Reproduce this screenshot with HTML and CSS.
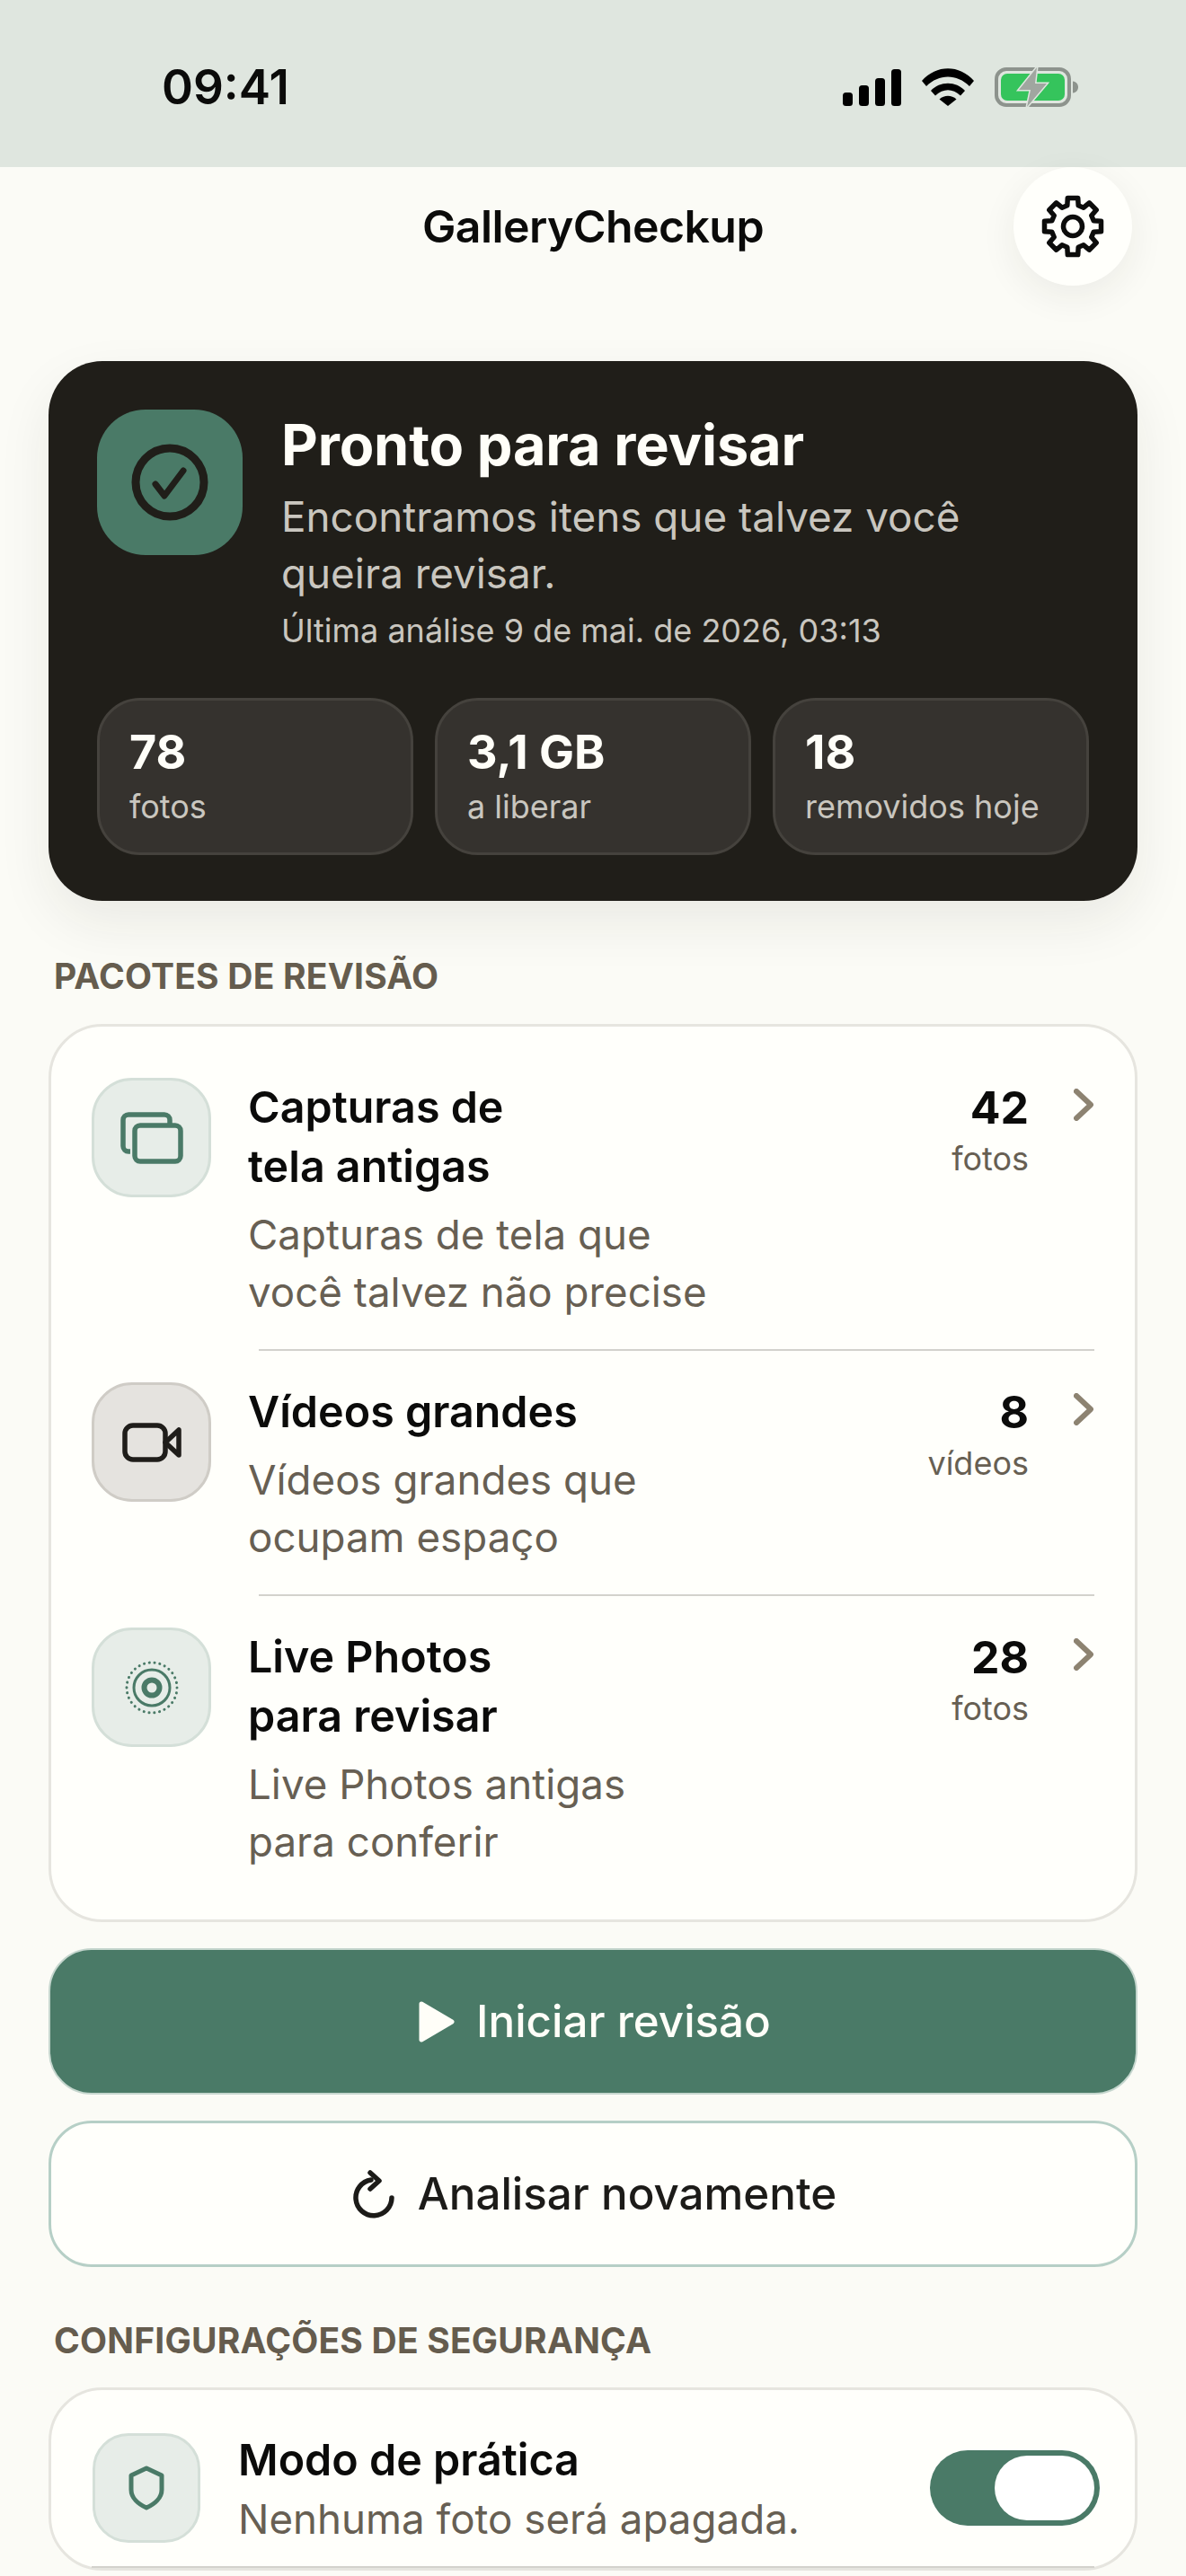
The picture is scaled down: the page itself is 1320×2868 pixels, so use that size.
FILE: index.html
```html
<!DOCTYPE html>
<html lang="pt-BR">
<head>
  <meta charset="UTF-8">
  <meta name="viewport" content="width=device-width, initial-scale=1.0">
  <title>GalleryCheckup</title>
  <link rel="stylesheet" href="styles.css">
</head>
<body>
  <div class="status">
    <span class="status__time">09:41</span>
    <div class="status__icons">
      <svg class="status__signal" width="65" height="41" viewBox="0 0 65 41">
        <rect x="0" y="26" width="11" height="15" rx="3.5"/>
        <rect x="18" y="18" width="11" height="23" rx="3.5"/>
        <rect x="36" y="10" width="11" height="31" rx="3.5"/>
        <rect x="54" y="0" width="11" height="41" rx="3.5"/>
      </svg>
      <svg class="status__wifi" width="58" height="42" viewBox="0 0 58 42">
        <path d="M0 14C16-4.500 42-4.500 58 14L53 20C39 6 19 6 5 20Z"/>
        <path d="M10 25C20 14 38 14 48 25L43 30.500C34 22 24 22 15 30.500Z"/>
        <path d="M19.500 34.500C25 29.500 33 29.500 38.500 34.500L29 42Z"/>
      </svg>
      <svg class="status__battery" width="93" height="44" viewBox="0 0 93 44">
        <rect x="2" y="2" width="81" height="40" rx="11" fill="none" stroke="#8d938d" stroke-width="4"/>
        <rect x="7" y="7" width="71" height="30" rx="7" fill="#35c45c"/>
        <path d="M87 15.500C91 16 93 19 93 22C93 25 91 28 87 28.500Z" fill="#8d938d"/>
        <path d="M47 0L27 25H40L36 44L58 18H45Z" fill="#a0a6a0" stroke="#dfe6df" stroke-width="3" paint-order="stroke"/>
      </svg>
    </div>
  </div>

  <header class="topbar">
    <h1 class="topbar__title">GalleryCheckup</h1>
    <button class="topbar__gear" type="button" aria-label="Configurações">
      <svg width="72" height="72" viewBox="-36 -36 72 72" fill="none" stroke="#0c0c0b" stroke-width="5.500" stroke-linejoin="round">
        <polygon points="-6.200,-23.200 -5.700,-31.500 5.700,-31.500 6.200,-23.200 12,-20.800 18.300,-26.200 26.200,-18.300 20.800,-12 23.200,-6.200 31.500,-5.700 31.500,5.700 23.200,6.200 20.800,12 26.200,18.300 18.300,26.200 12,20.800 6.200,23.200 5.700,31.500 -5.700,31.500 -6.200,23.200 -12,20.800 -18.300,26.200 -26.200,18.300 -20.800,12 -23.200,6.200 -31.500,5.700 -31.500,-5.700 -23.200,-6.200 -20.800,-12 -26.200,-18.300 -18.300,-26.200 -12,-20.800"/>
        <circle r="10.500"/>
      </svg>
    </button>
  </header>

  <main class="content">
    <section class="hero">
      <div class="hero__top">
        <div class="hero__icon">
          <svg width="86" height="86" viewBox="0 0 86 86" fill="none" stroke="#201e19" stroke-linecap="round" stroke-linejoin="round">
            <circle cx="43" cy="43" r="38" stroke-width="9"/>
            <path d="M27 45L37 58L58 30" stroke-width="7"/>
          </svg>
        </div>
        <div class="hero__text">
          <h2 class="hero__title">Pronto para revisar</h2>
          <p class="hero__desc">Encontramos itens que talvez você<br>queira revisar.</p>
          <p class="hero__date">Última análise 9 de mai. de 2026, 03:13</p>
        </div>
      </div>
      <div class="stats">
        <div class="stat"><div class="stat__value">78</div><div class="stat__label">fotos</div></div>
        <div class="stat"><div class="stat__value">3,1 GB</div><div class="stat__label">a liberar</div></div>
        <div class="stat"><div class="stat__value">18</div><div class="stat__label">removidos hoje</div></div>
      </div>
    </section>

    <h3 class="section-label">PACOTES DE REVISÃO</h3>
    <section class="card card--list">
      <div class="row">
        <div class="tile">
          <svg width="70" height="58" viewBox="0 0 70 58" fill="none" stroke="#4a7a67" stroke-width="5.500" stroke-linejoin="round">
            <path d="M11 44H9A6 6 0 0 1 3 38V9A6 6 0 0 1 9 3H49A6 6 0 0 1 55 9V15"/>
            <rect x="16" y="15" width="51" height="40" rx="6"/>
          </svg>
        </div>
        <div class="row__body">
          <div class="row__title">Capturas de<br>tela antigas</div>
          <div class="row__desc">Capturas de tela que<br>você talvez não precise</div>
        </div>
        <div class="row__count"><div class="row__num">42</div><div class="row__unit">fotos</div></div>
        <svg class="chevron" width="22" height="36" viewBox="0 0 22 36"><path d="M3 3L19 18L3 33"/></svg>
      </div>
      <div class="divider"></div>
      <div class="row">
        <div class="tile tile--grey">
          <svg width="66" height="44" viewBox="0 0 66 44" fill="none" stroke="#1f1d1a" stroke-width="5.500" stroke-linejoin="round" stroke-linecap="round">
            <rect x="3" y="3" width="45" height="38" rx="9"/>
            <path d="M48 22L63 8V36Z"/>
          </svg>
        </div>
        <div class="row__body">
          <div class="row__title">Vídeos grandes</div>
          <div class="row__desc">Vídeos grandes que<br>ocupam espaço</div>
        </div>
        <div class="row__count"><div class="row__num">8</div><div class="row__unit">vídeos</div></div>
        <svg class="chevron" width="22" height="36" viewBox="0 0 22 36"><path d="M3 3L19 18L3 33"/></svg>
      </div>
      <div class="divider"></div>
      <div class="row">
        <div class="tile">
          <svg width="60" height="60" viewBox="0 0 60 60" fill="none" stroke="#4a7a67">
            <circle cx="30" cy="30" r="28" stroke-width="3" stroke-linecap="round" stroke-dasharray="0.100 5.760"/>
            <circle cx="30" cy="30" r="20" stroke-width="3"/>
            <circle cx="30" cy="30" r="8.500" stroke-width="6"/>
          </svg>
        </div>
        <div class="row__body">
          <div class="row__title">Live Photos<br>para revisar</div>
          <div class="row__desc">Live Photos antigas<br>para conferir</div>
        </div>
        <div class="row__count"><div class="row__num">28</div><div class="row__unit">fotos</div></div>
        <svg class="chevron" width="22" height="36" viewBox="0 0 22 36"><path d="M3 3L19 18L3 33"/></svg>
      </div>
    </section>

    <button class="btn btn--primary" type="button">
      <svg width="40" height="46" viewBox="0 0 40 46"><path d="M3 3L37 23L3 43Z" fill="#fffef8" stroke="#fffef8" stroke-width="5" stroke-linejoin="round"/></svg>
      Iniciar revisão
    </button>
    <button class="btn btn--secondary" type="button">
      <svg width="46" height="54" viewBox="0 0 46 54" fill="none" stroke="#1c1b18" stroke-width="5.500" stroke-linecap="round" stroke-linejoin="round">
        <path d="M20 11A20 20 0 1 0 43 31"/>
        <path d="M19 3L29 12L19 21"/>
      </svg>
      Analisar novamente
    </button>

    <h3 class="section-label section-label--safety">CONFIGURAÇÕES DE SEGURANÇA</h3>
    <section class="card card--safety">
      <div class="row row--safety">
        <div class="tile tile--small">
          <svg width="42" height="50" viewBox="0 0 42 50" fill="none" stroke="#4a7a67" stroke-width="5" stroke-linejoin="round">
            <path d="M21 3L38 11V27C38 36 30 43 21 47C12 43 4 36 4 27V11Z"/>
          </svg>
        </div>
        <div class="row__body">
          <div class="row__title">Modo de prática</div>
          <div class="row__desc">Nenhuma foto será apagada.</div>
        </div>
        <div class="toggle"><div class="toggle__thumb"></div></div>
      </div>
      <div class="divider divider--full"></div>
    </section>
  </main>
</body>
</html>
```

FILE: styles.css
```css
:root {
  --green: #4a7a67;
  --ink: #0b0b0a;
  --muted: #675f53;
  --line: #e6e5df;
  --paper: #fffffb;
}
*,
*::after,
*::before {
  box-sizing: border-box;
}
html,
body {
  margin: 0;
  height: 100%;
  overflow: hidden;
}
body {
  background-color: #fbfbf6;
  color: var(--ink);
  font-family: 'Inter', sans-serif;
}
h1,
h2,
h3,
p {
  margin: 0;
}

.status {
  display: flex;
  justify-content: space-between;
  align-items: center;
  height: 186px;
  padding: 0 120px 0 180px;
  background-color: #dfe6df;
}
.status__time {
  font-size: 53px;
  font-weight: 600;
  line-height: 1;
  margin-bottom: -8px;
}
.status__icons {
  display: flex;
  align-items: center;
  gap: 23px;
  margin-top: 8px;
}

.topbar {
  display: flex;
  justify-content: center;
  align-items: center;
  position: relative;
  height: 132px;
}
.topbar__title {
  font-size: 50px;
  font-weight: 600;
  letter-spacing: -0.6px;
}
.topbar__gear {
  position: absolute;
  right: 60px;
  top: 0;
  display: flex;
  align-items: center;
  justify-content: center;
  width: 132px;
  height: 132px;
  padding: 0;
  border: 0;
  border-radius: 50%;
  background-color: var(--paper);
  box-shadow: 0 12px 40px rgba(40, 38, 30, .07);
}

.content {
  padding: 84px 54px 0;
}

.hero {
  height: 601px;
  padding: 54px 54px 0;
  border-radius: 60px;
  background-color: #201e19;
  box-shadow: 0 24px 60px rgba(40, 38, 30, .08);
}
.hero__top {
  display: flex;
  gap: 43px;
}
.hero__icon {
  display: flex;
  align-items: center;
  justify-content: center;
  flex: none;
  width: 162px;
  height: 162px;
  border-radius: 54px;
  background-color: var(--green);
}
.hero__text {
  margin-top: 2px;
}
.hero__title {
  margin-bottom: 12px;
  color: #fffef8;
  font-size: 63px;
  font-weight: 700;
  line-height: 74px;
  letter-spacing: -0.15px;
}
.hero__desc {
  color: #c9c6bf;
  font-size: 45.800px;
  line-height: 63px;
}
.hero__date {
  margin-top: 8px;
  color: #c9c6bf;
  font-size: 36px;
  line-height: 48px;
}

.stats {
  display: grid;
  grid-template-columns: repeat(3, 1fr);
  gap: 24px;
  margin-top: 51px;
}
.stat {
  height: 175px;
  padding: 27px 33px 0;
  border: 3px solid #45423d;
  border-radius: 48px;
  background-color: #35322e;
}
.stat__value {
  margin-bottom: 5px;
  color: #fffef8;
  font-size: 52px;
  font-weight: 700;
  line-height: 62px;
}
.stat__label {
  color: #c9c6bf;
  font-size: 36px;
  line-height: 48px;
}

.section-label {
  margin: 60px 6px 29px;
  color: #655c4e;
  font-size: 39px;
  font-weight: 700;
  line-height: 48px;
  letter-spacing: 0.2px;
}
.section-label--safety {
  margin-top: 58px;
  margin-bottom: 28px;
}

.card {
  border: 3px solid var(--line);
  border-radius: 60px;
  background-color: var(--paper);
}
.card--list {
  padding: 23px 0 23px;
}
.card--safety {
  padding-top: 41px;
}

.row {
  display: flex;
  align-items: flex-start;
  padding: 34px 45px 31px;
}
.row--safety {
  align-items: center;
  padding: 0 39px 19px 46px;
}
.tile {
  display: flex;
  align-items: center;
  justify-content: center;
  flex: none;
  width: 133px;
  height: 133px;
  border: 3px solid #d4dfd8;
  border-radius: 45px;
  background-color: #e7ede8;
}
.tile--grey {
  border-color: #cfccc6;
  background-color: #e5e3df;
}
.tile--small {
  width: 120px;
  height: 122px;
  border-radius: 40px;
}
.row__body {
  flex: 1;
  margin-left: 41px;
  min-width: 0;
}
.row--safety .row__body {
  margin-left: 42px;
  padding-top: 4px;
}
.row__title {
  font-size: 48.400px;
  font-weight: 600;
  line-height: 66px;
}
.row__desc {
  margin-top: 11px;
  color: var(--muted);
  font-size: 45.700px;
  line-height: 64px;
}
.row--safety .row__desc {
  margin-top: 0;
  line-height: 66px;
}
.row__count {
  flex: none;
  text-align: right;
}
.row__num {
  font-size: 50px;
  font-weight: 700;
  line-height: 66px;
}
.row__unit {
  color: var(--muted);
  font-size: 36px;
  line-height: 48px;
}
.chevron {
  flex: none;
  margin: 12px 1px 0 50px;
  fill: none;
  stroke: #8d8371;
  stroke-width: 6;
  stroke-linecap: round;
  stroke-linejoin: round;
}
.divider {
  height: 2px;
  margin: 0 45px 1px 231px;
  background-color: #d3d2cc;
}
.divider--full {
  margin: 0 45px;
}

.btn {
  display: flex;
  align-items: center;
  justify-content: center;
  width: 100%;
  height: 163px;
  border-radius: 48px;
  font-family: inherit;
  font-size: 49.300px;
  line-height: 1;
}
.btn--primary {
  gap: 24px;
  margin-top: 29px;
  padding-left: 10px;
  border: 2px solid #c5d6ce;
  background-color: var(--green);
  color: #fffef8;
  font-weight: 500;
}
.btn--secondary {
  gap: 26px;
  margin-top: 29px;
  padding-left: 10px;
  border: 3px solid #b6cfc6;
  background-color: var(--paper);
  color: #1c1b18;
  font-weight: 500;
}

.toggle {
  flex: none;
  width: 189px;
  height: 84px;
  padding: 6px 6px 6px 72px;
  border-radius: 42px;
  background-color: var(--green);
}
.toggle__thumb {
  height: 100%;
  border-radius: 36px;
  background-color: #fff;
}
```
